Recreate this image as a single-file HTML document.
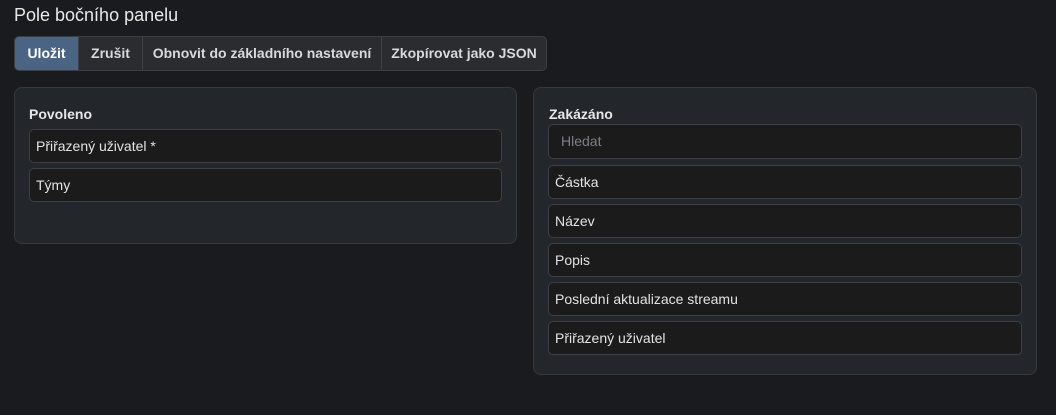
<!DOCTYPE html>
<html><head><meta charset="utf-8"><style>
*{box-sizing:border-box;margin:0;padding:0}
body{width:1056px;height:415px;background:#1a1b1e;font-family:"Liberation Sans",sans-serif;color:#e4e6e9;position:relative;overflow:hidden}
.title{position:absolute;left:14px;top:5px;font-size:18px;color:#e8e8e8}
.btns{position:absolute;left:14px;top:36px;height:35px;display:flex;border:1px solid #3b3e43;border-radius:5px;overflow:hidden;background:#2b2c2f}
.btns div{font-size:14px;font-weight:bold;color:#d8d9db;text-align:center;line-height:33px;border-left:1px solid #3e4146;white-space:nowrap}
.btns div:first-child{border-left:none;background:#4a6584;color:#fff}
.panel{position:absolute;background:#23262b;border:1px solid #35383d;border-radius:8px}
.h{position:absolute;font-size:14px;font-weight:bold;color:#e6e7e9}
.it{position:absolute;height:34px;background:#1b1b1c;border:1px solid #3c3f44;border-radius:5px;font-size:14px;line-height:32px;padding-left:6px;color:#e2e3e5}
</style></head><body>
<div class="title">Pole bočního panelu</div>
<div class="btns"><div style="width:63px">Uložit</div><div style="width:64px">Zrušit</div><div style="width:239px">Obnovit do základního nastavení</div><div style="width:165px">Zkopírovat jako JSON</div></div>
<div class="panel" style="left:14px;top:87px;width:503px;height:157px"></div>
<div class="h" style="left:29px;top:106px">Povoleno</div>
<div class="it" style="left:29px;top:129px;width:473px">Přiřazený uživatel *</div>
<div class="it" style="left:29px;top:168px;width:473px">Týmy</div>
<div class="panel" style="left:533px;top:87px;width:504px;height:288px"></div>
<div class="h" style="left:549px;top:106px">Zakázáno</div>
<div class="it" style="left:548px;top:124px;width:474px;height:35px;line-height:33px;padding-left:12px;color:#7d7f83">Hledat</div>
<div class="it" style="left:548px;top:165px;width:474px">Částka</div>
<div class="it" style="left:548px;top:204px;width:474px">Název</div>
<div class="it" style="left:548px;top:243px;width:474px">Popis</div>
<div class="it" style="left:548px;top:282px;width:474px">Poslední aktualizace streamu</div>
<div class="it" style="left:548px;top:321px;width:474px">Přiřazený uživatel</div>
</body></html>
